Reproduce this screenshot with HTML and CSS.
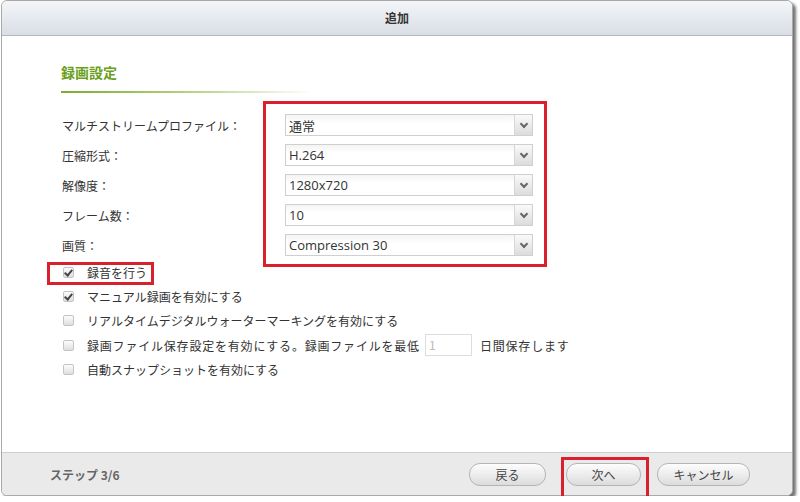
FILE: index.html
```html
<!DOCTYPE html>
<html lang="ja">
<head>
  <meta charset="UTF-8">
  <title>追加</title>
  <link rel="stylesheet" href="styles.css">
</head>
<body>
  <div class="dialog">
    <div class="dialog-header">追加</div>

    <div class="dialog-body">
      <h2 class="section-title">録画設定</h2>

      <div class="form-grid">
        <label>マルチストリームプロファイル：</label>
        <div class="select"><span>通常</span><i class="arrow"></i></div>
        <label>圧縮形式：</label>
        <div class="select"><span>H.264</span><i class="arrow"></i></div>
        <label>解像度：</label>
        <div class="select"><span>1280x720</span><i class="arrow"></i></div>
        <label>フレーム数：</label>
        <div class="select"><span>10</span><i class="arrow"></i></div>
        <label>画質：</label>
        <div class="select"><span>Compression 30</span><i class="arrow"></i></div>
      </div>

      <ul class="checks">
        <li><span class="box checked"></span>録音を行う</li>
        <li><span class="box checked"></span>マニュアル録画を有効にする</li>
        <li><span class="box"></span>リアルタイムデジタルウォーターマーキングを有効にする</li>
        <li class="wide"><span class="box"></span>録画ファイル保存設定を有効にする。録画ファイルを最低<span class="days">1</span>日間保存します</li>
        <li><span class="box"></span>自動スナップショットを有効にする</li>
      </ul>
    </div>

    <div class="dialog-footer">
      <span class="step">ステップ 3/6</span>
      <div class="actions">
        <button>戻る</button>
        <button>次へ</button>
        <button>キャンセル</button>
      </div>
    </div>

    <!-- 注釈の赤枠 -->
    <div class="mark mark-selects"></div>
    <div class="mark mark-audio"></div>
    <div class="mark mark-next"></div>
  </div>
</body>
</html>
```

FILE: styles.css
```css
/* 全体 */
body {
  margin: 0;
  background-color: #fff;
  font-family: "Noto Sans CJK JP", "Open Sans", sans-serif;
  color: #333;
}

.dialog {
  position: relative;
  width: 790px;
  height: 494px;
  margin-left: 1px;
  border: 1px solid #a9a9a9;
  border-radius: 6px;
  background-color: #fff;
  box-shadow: 3px 3px 3px rgba(0, 0, 0, 0.55);
  display: flex;
  flex-direction: column;
}

.dialog-header {
  height: 34px;
  line-height: 34px;
  text-align: center;
  font-size: 12px;
  font-weight: bold;
  color: #333;
  background: linear-gradient(#f3f5f8, #d9dee5);
  border-bottom: 1px solid #b3b8bf;
  border-radius: 6px 6px 0 0;
}

.dialog-body {
  flex: 1;
  padding: 26px 0 0 59px;
}

.section-title {
  margin: 0;
  font-size: 14px;
  line-height: 20px;
  color: #6a9f1c;
  font-weight: bold;
  padding-bottom: 9px;
  width: 250px;
  border-bottom: 2px solid transparent;
  border-image: linear-gradient(to right, #79ad2a, #b9d58a 55%, rgba(255, 255, 255, 0)) 1;
}

.form-grid {
  display: grid;
  grid-template-columns: 224px 248px;
  grid-auto-rows: 30px;
  align-items: center;
  margin-top: 17px;
}

.form-grid label {
  font-size: 12px;
  padding-left: 1px;
}

.select {
  height: 22px;
  box-sizing: border-box;
  border: 1px solid #cfcfcf;
  background: linear-gradient(#f4f4f4, #fff 40%);
  display: flex;
  align-items: center;
  font-size: 13px;
}

.select span {
  flex: 1;
  padding-left: 3px;
  font-family: "Open Sans", "Noto Sans CJK JP", sans-serif;
}

.select .arrow {
  width: 17px;
  height: 100%;
  border-left: 1px solid #d6d6d6;
  background: linear-gradient(#fafafa, #dcdcdc);
  position: relative;
}

.select .arrow::after {
  content: "";
  position: absolute;
  left: 6px;
  top: 6px;
  width: 4px;
  height: 4px;
  border-right: 2px solid #666;
  border-bottom: 2px solid #666;
  transform: rotate(45deg);
}

.checks {
  list-style: none;
  margin: 0;
  padding: 0 0 0 2px;
}

.checks li {
  height: 24.3px;
  display: flex;
  align-items: center;
  font-size: 12px;
}

.checks li.wide {
  letter-spacing: 0.8px;
}

.box {
  width: 9px;
  height: 9px;
  border: 1px solid #c4c4c4;
  border-radius: 2px;
  background: linear-gradient(#fdfdfd, #dedede);
  margin-right: 13px;
  position: relative;
}

.box.checked::after {
  content: "";
  position: absolute;
  left: 2px;
  top: 0;
  width: 3px;
  height: 6px;
  border-right: 2px solid #444;
  border-bottom: 2px solid #444;
  transform: rotate(40deg);
}

.days {
  display: inline-block;
  width: 42px;
  height: 20px;
  line-height: 20px;
  border: 1px solid #ddd;
  color: #bbb;
  font-size: 12px;
  padding-left: 3px;
  margin: 0 8px 0 5px;
}

.dialog-footer {
  height: 42px;
  border-top: 1px solid #cdcdcd;
  background-color: #eaeaea;
  border-radius: 0 0 6px 6px;
  display: flex;
  align-items: center;
  justify-content: space-between;
  padding: 0 42px 0 48px;
}

.step {
  font-size: 12px;
  font-weight: bold;
  color: #666;
}

.actions {
  display: flex;
  gap: 20px;
}

.actions button {
  height: 23px;
  width: 77px;
  border: 1px solid #b5b5b5;
  border-radius: 11px;
  background: linear-gradient(#fdfdfd, #dcdcdc);
  font-family: inherit;
  font-size: 12px;
  color: #444;
  padding: 0;
}

.actions button:nth-child(2) {
  width: 75px;
}

.actions button:nth-child(3) {
  width: 93px;
  margin-left: -4px;
}

/* 赤枠 */
.mark {
  position: absolute;
  border: 3px solid #d9202c;
}

.mark-selects {
  left: 261px;
  top: 100px;
  width: 278px;
  height: 160px;
}

.mark-audio {
  left: 45px;
  top: 261px;
  width: 101px;
  height: 17px;
}

.mark-next {
  left: 559px;
  top: 456px;
  width: 82px;
  height: 37px;
}
```
